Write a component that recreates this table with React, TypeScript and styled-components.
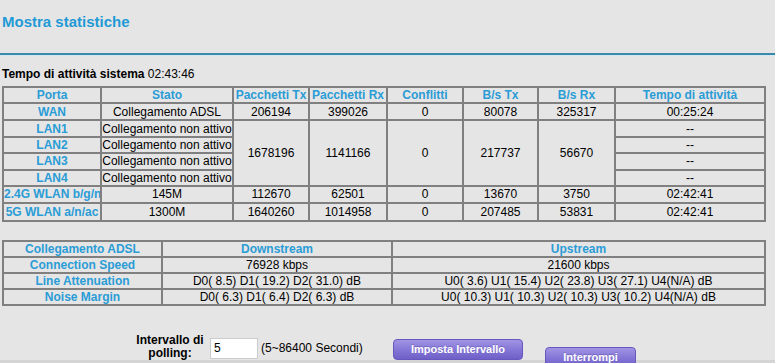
import React from 'react'
import styled, { createGlobalStyle } from 'styled-components'

const GlobalStyle = createGlobalStyle`
  html, body {
    margin: 0;
    padding: 0;
    background: #e5e5e5;
  }

  body {
    font-family: 'Liberation Sans', Arial, sans-serif;
    color: #000;
  }
`

const Page = styled.div`
  height: 363px;
  overflow: hidden;
  background: linear-gradient(to top, #d5d5d5 0, #d5d5d5 3px, #e5e5e5 3px);
`

const Header = styled.header`
  padding: 13px 0 0 2px;
`

const Title = styled.h1`
  margin: 0;
  font-size: 15px;
  line-height: 18px;
  font-weight: bold;
  color: #1f9ad6;
`

const Divider = styled.div`
  margin-top: 22px;
  border-top: 2px solid #3c8aab;
  box-shadow: 0 1px 0 #d2e9f1;
`

const Content = styled.section`
  padding: 0 2px;
`

const Uptime = styled.div`
  margin-top: 12px;
  font-size: 12px;
  line-height: 14px;

  & > b {
    font-weight: bold;
  }
`

const StatsTable = styled.table<{ $gap: number }>`
  margin-top: ${(p) => p.$gap}px;
  width: 764px;
  table-layout: fixed;
  border-collapse: separate;
  border-spacing: 0;
  border: 1px solid #808080;
  font-size: 12px;
  line-height: 14px;
`

const Row = styled.tr<{ $h: number }>`
  height: ${(p) => p.$h}px;
`

const Head = styled.th`
  border: 1px solid #808080;
  padding: 0;
  color: #2a9cd6;
  font-weight: bold;
  text-align: center;
  white-space: nowrap;
  overflow: hidden;
`

const Cell = styled.td`
  border: 1px solid #808080;
  padding: 0;
  text-align: center;
  white-space: nowrap;
  overflow: hidden;
`

const PollForm = styled.div`
  display: flex;
  align-items: flex-start;
  margin-top: 28px;
  padding-left: 130px;
`

const PollLabel = styled.label`
  width: 76px;
  font-size: 12px;
  line-height: 13px;
  font-weight: bold;
  text-align: center;
`

const PollInput = styled.input`
  box-sizing: border-box;
  margin: 4px 0 0 2px;
  width: 48px;
  height: 21px;
  padding: 0 3px;
  border: 1px solid #cccccc;
  background: #fff;
  font: 12px 'Liberation Sans', Arial, sans-serif;
  color: #000;
  outline: none;
`

const Hint = styled.span`
  margin: 7px 0 0 3px;
  width: 110px;
  font-size: 12px;
  line-height: 14px;
  white-space: nowrap;
`

const ActionButton = styled.button<{ $top: number; $width: number }>`
  box-sizing: border-box;
  margin: ${(p) => p.$top}px 0 0 22px;
  width: ${(p) => p.$width}px;
  height: 21px;
  padding: 0;
  border: 1px solid #6757bf;
  border-radius: 4px;
  background: linear-gradient(to bottom, #a094e4 0%, #8577d7 50%, #6e5fc6 100%);
  color: #fff;
  font: bold 11px/13px 'Liberation Sans', Arial, sans-serif;
  text-shadow: 0 -1px 0 rgba(40, 20, 110, 0.25);
  cursor: pointer;
`

const portCols = [98, 132, 76, 78, 76, 75, 77, 150]
const adslCols = [159, 230, 373]

const lanPorts = ['LAN1', 'LAN2', 'LAN3', 'LAN4']
const lanHeights = [17, 15.5, 16.5, 15]

const adslRows = [
  { label: 'Connection Speed', down: '76928 kbps', up: '21600 kbps' },
  {
    label: 'Line Attenuation',
    down: 'D0( 8.5) D1( 19.2) D2( 31.0) dB',
    up: 'U0( 3.6) U1( 15.4) U2( 23.8) U3( 27.1) U4(N/A) dB',
  },
  {
    label: 'Noise Margin',
    down: 'D0( 6.3) D1( 6.4) D2( 6.3) dB',
    up: 'U0( 10.3) U1( 10.3) U2( 10.3) U3( 10.2) U4(N/A) dB',
  },
]

const wlanRows = [
  { port: '2.4G WLAN b/g/n', state: '145M', tx: '112670', rx: '62501', bTx: '13670', bRx: '3750', up: '02:42:41' },
  { port: '5G WLAN a/n/ac', state: '1300M', tx: '1640260', rx: '1014958', bTx: '207485', bRx: '53831', up: '02:42:41' },
]

const App = (): JSX.Element => {
  return (
    <Page>
      <GlobalStyle />
      <Header>
        <Title>Mostra statistiche</Title>
      </Header>
      <Divider />

      <Content>
        <Uptime>
          <b>Tempo di attività sistema</b> 02:43:46
        </Uptime>

        <StatsTable $gap={5}>
          <colgroup>
            {portCols.map((w, i) => (
              <col key={i} style={{ width: w }} />
            ))}
          </colgroup>
          <tbody>
            <Row $h={16}>
              <Head>Porta</Head>
              <Head>Stato</Head>
              <Head>Pacchetti Tx</Head>
              <Head>Pacchetti Rx</Head>
              <Head>Conflitti</Head>
              <Head>B/s Tx</Head>
              <Head>B/s Rx</Head>
              <Head>Tempo di attività</Head>
            </Row>
            <Row $h={17}>
              <Head>WAN</Head>
              <Cell>Collegamento ADSL</Cell>
              <Cell>206194</Cell>
              <Cell>399026</Cell>
              <Cell>0</Cell>
              <Cell>80078</Cell>
              <Cell>325317</Cell>
              <Cell>00:25:24</Cell>
            </Row>
            {lanPorts.map((port, i) => (
              <Row key={port} $h={lanHeights[i]}>
                <Head>{port}</Head>
                <Cell>Collegamento non attivo</Cell>
                {i === 0 && (
                  <>
                    <Cell rowSpan={4}>1678196</Cell>
                    <Cell rowSpan={4}>1141166</Cell>
                    <Cell rowSpan={4}>0</Cell>
                    <Cell rowSpan={4}>217737</Cell>
                    <Cell rowSpan={4}>56670</Cell>
                  </>
                )}
                <Cell>--</Cell>
              </Row>
            ))}
            {wlanRows.map((r) => (
              <Row key={r.port} $h={17.5}>
                <Head>{r.port}</Head>
                <Cell>{r.state}</Cell>
                <Cell>{r.tx}</Cell>
                <Cell>{r.rx}</Cell>
                <Cell>0</Cell>
                <Cell>{r.bTx}</Cell>
                <Cell>{r.bRx}</Cell>
                <Cell>{r.up}</Cell>
              </Row>
            ))}
          </tbody>
        </StatsTable>

        <StatsTable $gap={18}>
          <colgroup>
            {adslCols.map((w, i) => (
              <col key={i} style={{ width: w }} />
            ))}
          </colgroup>
          <tbody>
            <Row $h={16}>
              <Head>Collegamento ADSL</Head>
              <Head>Downstream</Head>
              <Head>Upstream</Head>
            </Row>
            {adslRows.map((r) => (
              <Row key={r.label} $h={16}>
                <Head>{r.label}</Head>
                <Cell>{r.down}</Cell>
                <Cell>{r.up}</Cell>
              </Row>
            ))}
          </tbody>
        </StatsTable>

        <PollForm>
          <PollLabel htmlFor="poll">
            Intervallo di
            <br />
            polling:
          </PollLabel>
          <PollInput id="poll" defaultValue="5" />
          <Hint>(5~86400 Secondi)</Hint>
          <ActionButton $top={5} $width={130}>
            Imposta Intervallo
          </ActionButton>
          <ActionButton $top={13} $width={91}>
            Interrompi
          </ActionButton>
        </PollForm>
      </Content>
    </Page>
  )
}

export default App
